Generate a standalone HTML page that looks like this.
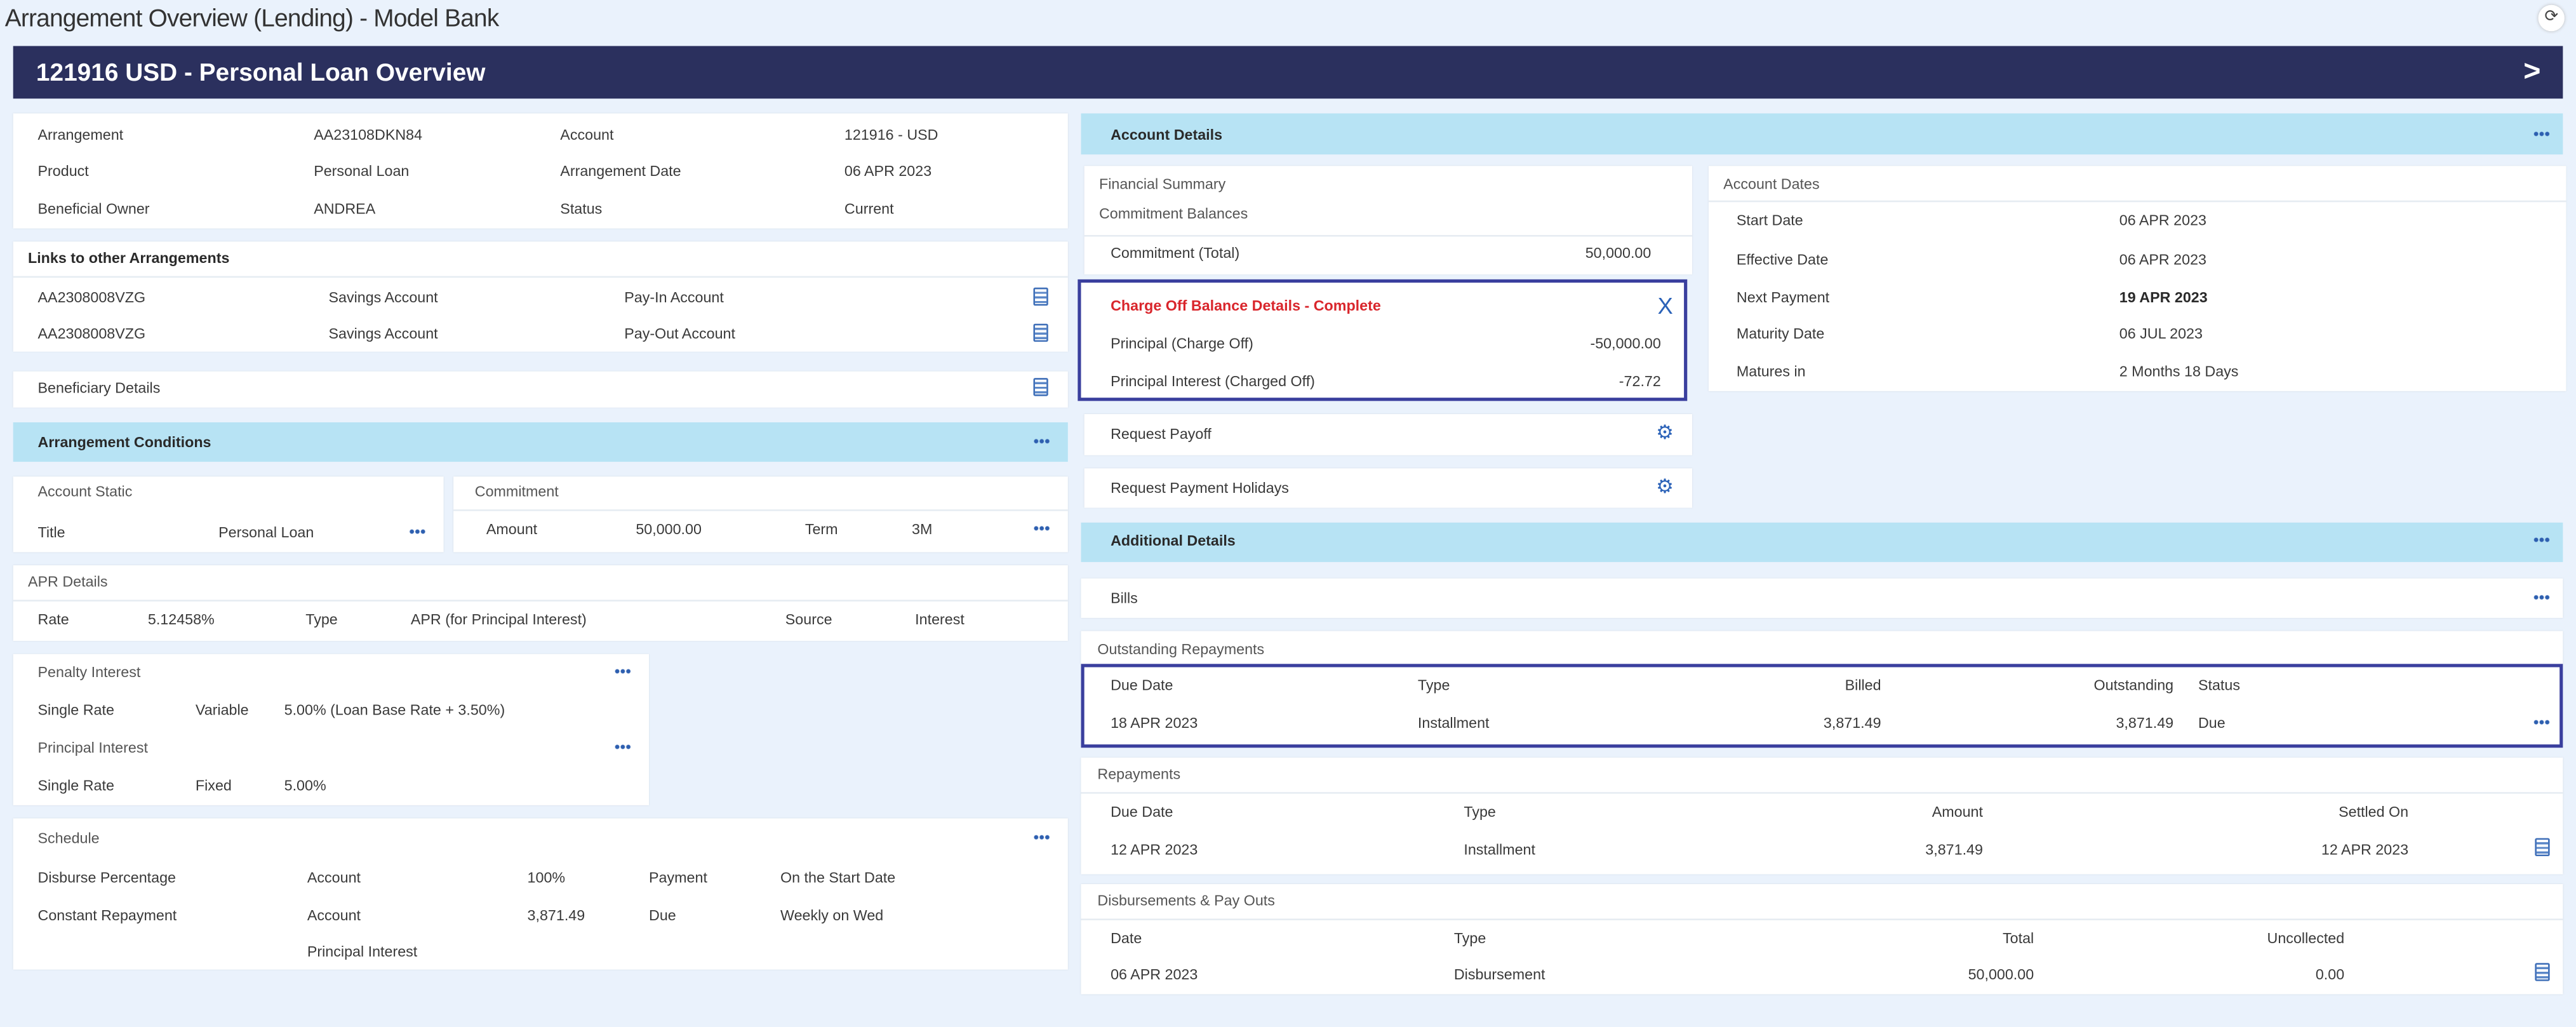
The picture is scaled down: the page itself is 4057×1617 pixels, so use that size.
<!DOCTYPE html>
<html><head><meta charset="utf-8">
<style>
html,body{margin:0;padding:0;}
body{width:4057px;height:1616px;overflow:hidden;background:#eaf2fc;}
#w{position:absolute;left:0;top:0;width:1568px;height:625px;transform:scale(2.5874);transform-origin:0 0;font-family:"Liberation Sans",sans-serif;color:#3a3a3a;}
.b{position:absolute;background:#fff;box-shadow:0 0 1px #d4dce6;}
.bar{position:absolute;background:#b7e3f4;}
.t{position:absolute;font-size:9px;line-height:12px;white-space:nowrap;}
.r{text-align:right;}
.bo{font-weight:bold;color:#2a2a2a;}
.h{color:#555;}
.dots{position:absolute;width:10px;height:3px;margin-top:1px;background:radial-gradient(circle at center,#2d5fb0 1.1px,transparent 1.5px) 0 0/3.4px 3px repeat-x;}
.ic{position:absolute;width:9px;height:11px;border:1.2px solid #3f6fb8;border-radius:1px;background:repeating-linear-gradient(#fff 0 1.5px,#5c88c8 1.5px 2.8px);box-sizing:border-box;}
.ln{position:absolute;height:1px;background:#e6ecf2;}
</style></head><body><div id="w">
<div class="t" style="left:3px;top:3px;font-size:15px;line-height:18px;color:#333;letter-spacing:-0.3px;">Arrangement Overview (Lending) - Model Bank</div>
<div style="position:absolute;left:1545px;top:3px;width:16px;height:16px;border-radius:50%;background:#fff;box-shadow:0 0 2px #bbb;font-size:10px;line-height:16px;text-align:center;color:#444;">⟳</div>
<div style="position:absolute;left:8px;top:28px;width:1552px;height:32px;background:#2b305e;"></div>
<div class="t" style="left:22px;top:36px;font-size:15px;line-height:18px;color:#fff;font-weight:bold;">121916 USD - Personal Loan Overview</div>
<div class="t" style="left:1536px;top:33px;font-size:18px;line-height:20px;color:#fff;font-weight:bold;">&gt;</div>

<!-- left column -->
<div class="b" style="left:8px;top:69px;width:642px;height:70px;"></div>
<div class="t" style="left:23px;top:76px">Arrangement</div><div class="t" style="left:191px;top:76px">AA23108DKN84</div><div class="t" style="left:341px;top:76px">Account</div><div class="t" style="left:514px;top:76px">121916 - USD</div>
<div class="t" style="left:23px;top:98px">Product</div><div class="t" style="left:191px;top:98px">Personal Loan</div><div class="t" style="left:341px;top:98px">Arrangement Date</div><div class="t" style="left:514px;top:98px">06 APR 2023</div>
<div class="t" style="left:23px;top:121px">Beneficial Owner</div><div class="t" style="left:191px;top:121px">ANDREA</div><div class="t" style="left:341px;top:121px">Status</div><div class="t" style="left:514px;top:121px">Current</div>

<div class="b" style="left:8px;top:147px;width:642px;height:67px;"></div>
<div class="ln" style="left:8px;top:168px;width:642px"></div>
<div class="t bo" style="left:17px;top:151px">Links to other Arrangements</div>
<div class="t" style="left:23px;top:175px">AA2308008VZG</div><div class="t" style="left:200px;top:175px">Savings Account</div><div class="t" style="left:380px;top:175px">Pay-In Account</div><div class="ic" style="left:629px;top:175px"></div>
<div class="t" style="left:23px;top:197px">AA2308008VZG</div><div class="t" style="left:200px;top:197px">Savings Account</div><div class="t" style="left:380px;top:197px">Pay-Out Account</div><div class="ic" style="left:629px;top:197px"></div>

<div class="b" style="left:8px;top:226px;width:642px;height:22px;"></div>
<div class="t" style="left:23px;top:230px">Beneficiary Details</div><div class="ic" style="left:629px;top:230px"></div>

<div class="bar" style="left:8px;top:257px;width:642px;height:24px;"></div>
<div class="t bo" style="left:23px;top:263px">Arrangement Conditions</div><div class="dots" style="left:629px;top:266px"></div>

<div class="b" style="left:8px;top:290px;width:262px;height:46px;"></div>
<div class="t h" style="left:23px;top:293px">Account Static</div>
<div class="t" style="left:23px;top:318px">Title</div><div class="t" style="left:133px;top:318px">Personal Loan</div><div class="dots" style="left:249px;top:321px"></div>
<div class="b" style="left:276px;top:290px;width:374px;height:46px;"></div>
<div class="ln" style="left:276px;top:310px;width:374px"></div>
<div class="t h" style="left:289px;top:293px">Commitment</div>
<div class="t" style="left:296px;top:316px">Amount</div><div class="t" style="left:387px;top:316px">50,000.00</div><div class="t" style="left:490px;top:316px">Term</div><div class="t" style="left:555px;top:316px">3M</div><div class="dots" style="left:629px;top:319px"></div>

<div class="b" style="left:8px;top:344px;width:642px;height:46px;"></div>
<div class="ln" style="left:8px;top:365px;width:642px"></div>
<div class="t h" style="left:17px;top:348px">APR Details</div>
<div class="t" style="left:23px;top:371px">Rate</div><div class="t" style="left:90px;top:371px">5.12458%</div><div class="t" style="left:186px;top:371px">Type</div><div class="t" style="left:250px;top:371px">APR (for Principal Interest)</div><div class="t" style="left:478px;top:371px">Source</div><div class="t" style="left:557px;top:371px">Interest</div>

<div class="b" style="left:8px;top:398px;width:387px;height:92px;"></div>
<div class="t h" style="left:23px;top:403px">Penalty Interest</div><div class="dots" style="left:374px;top:406px"></div>
<div class="t" style="left:23px;top:426px">Single Rate</div><div class="t" style="left:119px;top:426px">Variable</div><div class="t" style="left:173px;top:426px">5.00% (Loan Base Rate + 3.50%)</div>
<div class="t h" style="left:23px;top:449px">Principal Interest</div><div class="dots" style="left:374px;top:452px"></div>
<div class="t" style="left:23px;top:472px">Single Rate</div><div class="t" style="left:119px;top:472px">Fixed</div><div class="t" style="left:173px;top:472px">5.00%</div>

<div class="b" style="left:8px;top:498px;width:642px;height:92px;"></div>
<div class="t h" style="left:23px;top:504px">Schedule</div><div class="dots" style="left:629px;top:507px"></div>
<div class="t" style="left:23px;top:528px">Disburse Percentage</div><div class="t" style="left:187px;top:528px">Account</div><div class="t" style="left:321px;top:528px">100%</div><div class="t" style="left:395px;top:528px">Payment</div><div class="t" style="left:475px;top:528px">On the Start Date</div>
<div class="t" style="left:23px;top:551px">Constant Repayment</div><div class="t" style="left:187px;top:551px">Account</div><div class="t" style="left:321px;top:551px">3,871.49</div><div class="t" style="left:395px;top:551px">Due</div><div class="t" style="left:475px;top:551px">Weekly on Wed</div>
<div class="t" style="left:187px;top:573px">Principal Interest</div>

<!-- right column -->
<div class="bar" style="left:658px;top:69px;width:902px;height:25px;"></div>
<div class="t bo" style="left:676px;top:76px">Account Details</div><div class="dots" style="left:1542px;top:79px"></div>

<div class="b" style="left:660px;top:101px;width:370px;height:66px;"></div>
<div class="ln" style="left:660px;top:143px;width:370px"></div>
<div class="t h" style="left:669px;top:106px">Financial Summary</div>
<div class="t h" style="left:669px;top:124px">Commitment Balances</div>
<div class="t" style="left:676px;top:148px">Commitment (Total)</div><div class="t r" style="right:563px;top:148px">50,000.00</div>

<div class="b" style="left:656px;top:170px;width:371px;height:74px;border:2px solid #3a3f9e;box-sizing:border-box;box-shadow:none;"></div>
<div class="t" style="left:676px;top:180px;color:#d9262c;font-weight:bold;">Charge Off Balance Details - Complete</div>
<div class="t" style="left:1009px;top:178px;font-size:14px;line-height:16px;color:#2b62b8;">X</div>
<div class="t" style="left:676px;top:203px">Principal (Charge Off)</div><div class="t r" style="right:557px;top:203px">-50,000.00</div>
<div class="t" style="left:676px;top:226px">Principal Interest (Charged Off)</div><div class="t r" style="right:557px;top:226px">-72.72</div>

<div class="b" style="left:660px;top:252px;width:370px;height:25px;"></div>
<div class="t" style="left:676px;top:258px">Request Payoff</div><div class="t" style="left:1008px;top:257px;color:#2b62b8;font-size:12px;">⚙</div>
<div class="b" style="left:660px;top:285px;width:370px;height:24px;"></div>
<div class="t" style="left:676px;top:291px">Request Payment Holidays</div><div class="t" style="left:1008px;top:290px;color:#2b62b8;font-size:12px;">⚙</div>

<div class="b" style="left:1040px;top:101px;width:522px;height:137px;"></div>
<div class="ln" style="left:1040px;top:122px;width:522px"></div>
<div class="t h" style="left:1049px;top:106px">Account Dates</div>
<div class="t" style="left:1057px;top:128px">Start Date</div><div class="t" style="left:1290px;top:128px">06 APR 2023</div>
<div class="t" style="left:1057px;top:152px">Effective Date</div><div class="t" style="left:1290px;top:152px">06 APR 2023</div>
<div class="t" style="left:1057px;top:175px">Next Payment</div><div class="t bo" style="left:1290px;top:175px">19 APR 2023</div>
<div class="t" style="left:1057px;top:197px">Maturity Date</div><div class="t" style="left:1290px;top:197px">06 JUL 2023</div>
<div class="t" style="left:1057px;top:220px">Matures in</div><div class="t" style="left:1290px;top:220px">2 Months 18 Days</div>

<div class="bar" style="left:658px;top:318px;width:902px;height:24px;"></div>
<div class="t bo" style="left:676px;top:323px">Additional Details</div><div class="dots" style="left:1542px;top:326px"></div>

<div class="b" style="left:658px;top:352px;width:902px;height:24px;"></div>
<div class="t" style="left:676px;top:358px">Bills</div><div class="dots" style="left:1542px;top:361px"></div>

<div class="b" style="left:658px;top:384px;width:902px;height:20px;"></div>
<div class="t h" style="left:668px;top:389px">Outstanding Repayments</div>
<div class="b" style="left:658px;top:404px;width:902px;height:51px;border:2px solid #3a3f9e;box-sizing:border-box;box-shadow:none;"></div>
<div class="t" style="left:676px;top:411px">Due Date</div><div class="t" style="left:863px;top:411px">Type</div><div class="t r" style="right:423px;top:411px">Billed</div><div class="t r" style="right:245px;top:411px">Outstanding</div><div class="t" style="left:1338px;top:411px">Status</div>
<div class="t" style="left:676px;top:434px">18 APR 2023</div><div class="t" style="left:863px;top:434px">Installment</div><div class="t r" style="right:423px;top:434px">3,871.49</div><div class="t r" style="right:245px;top:434px">3,871.49</div><div class="t" style="left:1338px;top:434px">Due</div><div class="dots" style="left:1542px;top:437px"></div>

<div class="b" style="left:658px;top:461px;width:902px;height:71px;"></div>
<div class="ln" style="left:658px;top:482px;width:902px"></div>
<div class="t h" style="left:668px;top:465px">Repayments</div>
<div class="t" style="left:676px;top:488px">Due Date</div><div class="t" style="left:891px;top:488px">Type</div><div class="t r" style="right:361px;top:488px">Amount</div><div class="t r" style="right:102px;top:488px">Settled On</div>
<div class="t" style="left:676px;top:511px">12 APR 2023</div><div class="t" style="left:891px;top:511px">Installment</div><div class="t r" style="right:361px;top:511px">3,871.49</div><div class="t r" style="right:102px;top:511px">12 APR 2023</div><div class="ic" style="left:1543px;top:510px"></div>

<div class="b" style="left:658px;top:538px;width:902px;height:67px;"></div>
<div class="ln" style="left:658px;top:559px;width:902px"></div>
<div class="t h" style="left:668px;top:542px">Disbursements &amp; Pay Outs</div>
<div class="t" style="left:676px;top:565px">Date</div><div class="t" style="left:885px;top:565px">Type</div><div class="t r" style="right:330px;top:565px">Total</div><div class="t r" style="right:141px;top:565px">Uncollected</div>
<div class="t" style="left:676px;top:587px">06 APR 2023</div><div class="t" style="left:885px;top:587px">Disbursement</div><div class="t r" style="right:330px;top:587px">50,000.00</div><div class="t r" style="right:141px;top:587px">0.00</div><div class="ic" style="left:1543px;top:586px"></div>
</div></body></html>
